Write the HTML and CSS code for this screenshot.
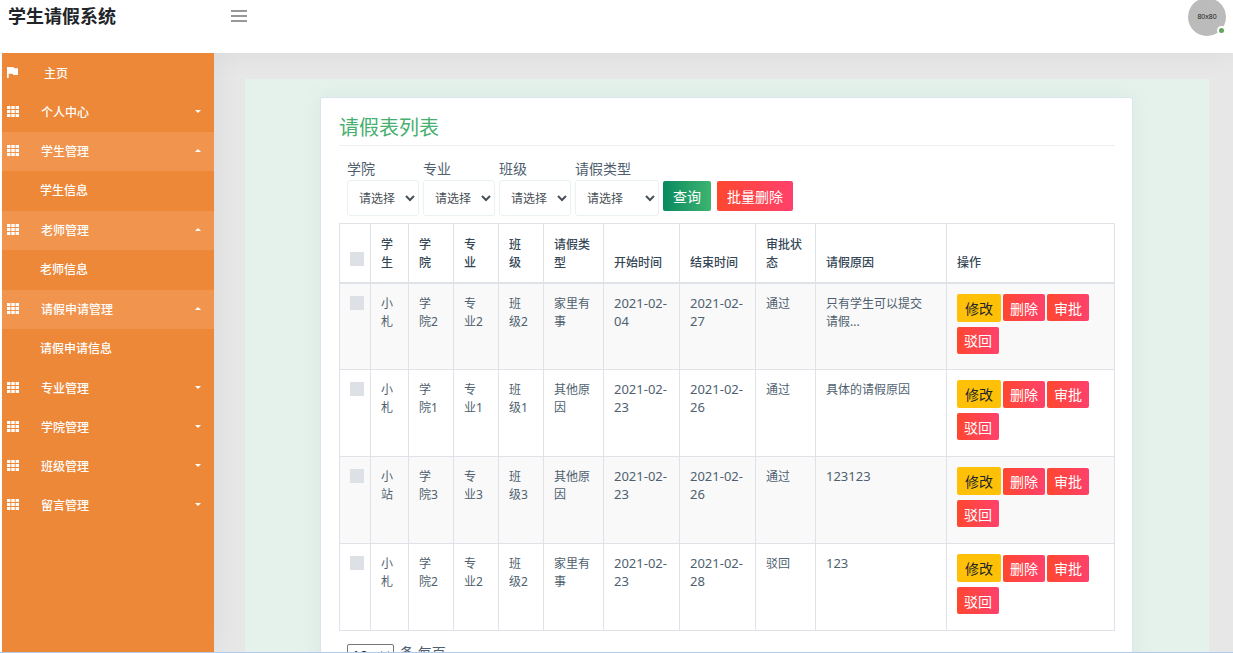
FILE: index.html
```html
<!DOCTYPE html>
<html lang="zh-CN">
<head>
<meta charset="utf-8">
<title>学生请假系统</title>
<link rel="stylesheet" href="styles.css">
</head>
<body>
<svg class="sprite" aria-hidden="true">
  <symbol id="grid" viewBox="0 0 12 11"><path d="M0 0h3.4v3H0zM4.3 0h3.4v3H4.3zM8.6 0H12v3H8.6zM0 4h3.4v3H0zM4.3 4h3.4v3H4.3zM8.6 4H12v3H8.6zM0 8h3.4v3H0zM4.3 8h3.4v3H4.3zM8.6 8H12v3H8.6z"/></symbol>
  <symbol id="flag" viewBox="0 0 12 11"><path d="M0 0h6.6l.5 1.3H11v6.6H6.2l-.4-1.2H1.7V11H0z"/></symbol>
</svg>
<header class="topbar">
  <h1 class="brand">学生请假系统</h1>
  <button class="menu-toggle" type="button" aria-label="菜单"><svg viewBox="0 0 16 12"><path d="M0 1h16M0 6h16M0 11h16"/></svg></button>
  <a class="avatar" href="#" aria-label="个人资料">80x80<span class="online"></span></a>
</header>
<div class="layout">
  <nav class="sidebar">
    <a class="item home" href="#"><svg><use href="#flag"/></svg>主页</a>
    <a class="item" href="#"><svg><use href="#grid"/></svg>个人中心<span class="caret"></span></a>
    <a class="item open" href="#"><svg><use href="#grid"/></svg>学生管理<span class="caret"></span></a>
    <a class="sub" href="#">学生信息</a>
    <a class="item open" href="#"><svg><use href="#grid"/></svg>老师管理<span class="caret"></span></a>
    <a class="sub" href="#">老师信息</a>
    <a class="item open" href="#"><svg><use href="#grid"/></svg>请假申请管理<span class="caret"></span></a>
    <a class="sub" href="#">请假申请信息</a>
    <a class="item" href="#"><svg><use href="#grid"/></svg>专业管理<span class="caret"></span></a>
    <a class="item" href="#"><svg><use href="#grid"/></svg>学院管理<span class="caret"></span></a>
    <a class="item" href="#"><svg><use href="#grid"/></svg>班级管理<span class="caret"></span></a>
    <a class="item" href="#"><svg><use href="#grid"/></svg>留言管理<span class="caret"></span></a>
  </nav>
  <main class="content">
    <div class="panel">
      <section class="card">
        <h2 class="title">请假表列表</h2>
        <form class="filters">
          <label class="field">学院<select><option>请选择</option></select></label>
          <label class="field">专业<select><option>请选择</option></select></label>
          <label class="field">班级<select><option>请选择</option></select></label>
          <label class="field wide">请假类型<select><option>请选择</option></select></label>
          <div class="actions">
            <button class="btn search" type="button">查询</button>
            <button class="btn danger" type="button">批量删除</button>
          </div>
        </form>
        <table class="list">
          <colgroup><col class="c-check"><col class="c-name"><col class="c-unit"><col class="c-unit"><col class="c-unit"><col class="c-type"><col class="c-date"><col class="c-date"><col class="c-type"><col class="c-reason"><col class="c-ops"></colgroup>
          <thead>
            <tr><th><input type="checkbox" aria-label="全选"></th><th>学生</th><th class="narrow">学院</th><th class="narrow">专业</th><th class="narrow">班级</th><th>请假类型</th><th>开始时间</th><th>结束时间</th><th>审批状态</th><th>请假原因</th><th>操作</th></tr>
          </thead>
          <tbody>
            <tr><td><input type="checkbox" aria-label="选择"></td><td>小札</td><td class="narrow">学院2</td><td class="narrow">专业2</td><td class="narrow">班级2</td><td>家里有事</td><td class="num">2021-02-04</td><td class="num">2021-02-27</td><td>通过</td><td class="narrow">只有学生可以提交请假...</td><td class="ops-cell"><div class="ops"><button class="op edit" type="button">修改</button><button class="op" type="button">删除</button><button class="op" type="button">审批</button><button class="op" type="button">驳回</button></div></td></tr>
            <tr><td><input type="checkbox" aria-label="选择"></td><td>小札</td><td class="narrow">学院1</td><td class="narrow">专业1</td><td class="narrow">班级1</td><td>其他原因</td><td class="num">2021-02-23</td><td class="num">2021-02-26</td><td>通过</td><td class="narrow">具体的请假原因</td><td class="ops-cell"><div class="ops"><button class="op edit" type="button">修改</button><button class="op" type="button">删除</button><button class="op" type="button">审批</button><button class="op" type="button">驳回</button></div></td></tr>
            <tr><td><input type="checkbox" aria-label="选择"></td><td>小站</td><td class="narrow">学院3</td><td class="narrow">专业3</td><td class="narrow">班级3</td><td>其他原因</td><td class="num">2021-02-23</td><td class="num">2021-02-26</td><td>通过</td><td class="num">123123</td><td class="ops-cell"><div class="ops"><button class="op edit" type="button">修改</button><button class="op" type="button">删除</button><button class="op" type="button">审批</button><button class="op" type="button">驳回</button></div></td></tr>
            <tr><td><input type="checkbox" aria-label="选择"></td><td>小札</td><td class="narrow">学院2</td><td class="narrow">专业2</td><td class="narrow">班级2</td><td>家里有事</td><td class="num">2021-02-23</td><td class="num">2021-02-28</td><td>驳回</td><td class="num">123</td><td class="ops-cell"><div class="ops"><button class="op edit" type="button">修改</button><button class="op" type="button">删除</button><button class="op" type="button">审批</button><button class="op" type="button">驳回</button></div></td></tr>
          </tbody>
        </table>
        <label class="pager"><select><option>10</option></select>条 每页</label>
      </section>
    </div>
  </main>
</div>
</body>
</html>
```
FILE: styles.css
```css
* { box-sizing: border-box; }
body {
  margin: 0;
  height: 100vh;
  display: flex;
  flex-direction: column;
  overflow: hidden;
  border-bottom: 1px solid #b2cbed;
  background: #fff;
  color: #4f5f6f;
  font: 12px/18px "Noto Sans", "Noto Sans CJK SC", sans-serif;
}
button, select { font-family: inherit; }
a { color: inherit; text-decoration: none; }
.sprite { display: none; }

.topbar {
  position: relative;
  z-index: 1;
  display: flex;
  align-items: flex-start;
  height: 53px;
  flex: none;
  padding: 0 7px 0 8px;
  background: #fff;
  box-shadow: 0 0 30px rgba(0, 0, 0, .06);
}
.brand {
  width: 222px;
  margin: 0;
  color: #212529;
  font-size: 18px;
  line-height: 32px;
  font-weight: 700;
}
.menu-toggle {
  padding: 10px 1px;
  border: 0;
  background: none;
  line-height: 0;
}
.menu-toggle svg { width: 16px; height: 12px; }
.menu-toggle path { stroke: #777; stroke-width: 1.5; }
.avatar {
  position: relative;
  width: 38px;
  height: 38px;
  margin: -2px 0 0 auto;
  border-radius: 50%;
  background: #bbb;
  color: #222;
  font: 7px/38px "Liberation Sans", sans-serif;
  text-align: center;
}
.online {
  position: absolute;
  right: 0;
  bottom: 1px;
  width: 9px;
  height: 9px;
  border: 2px solid #fff;
  border-radius: 50%;
  background: #5fa55a;
}

.layout { flex: 1; min-height: 0; display: flex; }
.sidebar {
  position: relative;
  z-index: 2;
  flex: none;
  width: 212px;
  margin-left: 2px;
  padding-top: 1px;
  background: #ed8839;
  color: #fff;
  font-weight: 500;
  box-shadow: 0 0 30px rgba(0, 0, 0, .06);
  clip-path: inset(0 -40px 0 0);
}
.item {
  display: flex;
  align-items: center;
  height: 39px;
  padding: 0 13px 0 5px;
}
.item svg {
  width: 12px;
  height: 11px;
  margin: 0 22px 2px 0;
  fill: #fff;
}
.home svg { margin-right: 25px; }
.open { background: #f0944e; }
.sub {
  display: block;
  padding-left: 38px;
  line-height: 40px;
}
.caret {
  margin: 0 0 2px auto;
  border: 3px solid transparent;
  border-top-color: #fff;
  border-bottom: 0;
}
.open .caret { border-bottom: 3px solid #fff; border-top: 0; }

.content { flex: 1; min-width: 0; padding: 26px 24px 0 31px; background: #e7e7e7; }
.panel { padding: 18px 76px 30px 75px; background: #e5f2eb; }
.card {
  padding: 13px 17px 30px 18px;
  border: 1px solid #dbe5ee;
  border-radius: 3px;
  background: #fff;
  box-shadow: 0 0 20px rgba(120, 150, 190, .1);
}
.title {
  margin: 0;
  padding-bottom: 1px;
  border-bottom: 1px solid #edeff0;
  color: #46b06e;
  font-size: 20px;
  line-height: 33px;
  font-weight: 400;
}
.filters { display: flex; gap: 4px; padding: 12px 8px 7px; font-size: 14px; }
.field { width: 72px; line-height: 22px; }
.field.wide { width: 84px; }
.field select {
  display: block;
  width: 100%;
  height: 36px;
  padding: 0 3px 0 7px;
  border: 1px solid #e9f2ef;
  border-radius: 3px;
  background: #fff;
  color: #495057;
  font-size: 12px;
}
.actions { display: flex; gap: 6px; padding-top: 23px; }
.btn {
  height: 30px;
  padding: 0 10px;
  border: 0;
  border-radius: 2px;
  color: #fff;
  font-size: 14px;
}
.search { background: linear-gradient(90deg, #08895f, #3eb470); }
.danger, .op { background: linear-gradient(90deg, #ff472f, #ff416c); }

.list { width: 100%; table-layout: fixed; border-collapse: collapse; }
.list th, .list td {
  padding: 11px 10px 0;
  border: 1px solid #dfe3e8;
  text-align: left;
  vertical-align: top;
  word-break: break-word;
}
.list thead tr { height: 59px; }
.list th {
  padding: 10px;
  border-bottom-width: 2px;
  color: #354656;
  font-weight: 500;
  vertical-align: bottom;
}
.list th.narrow, .list td.narrow { padding-right: 14px; }
.list td.num, .list td.ops-cell { padding-top: 10px; }
.list tbody tr { height: 87px; }
.list tbody tr:nth-child(odd) { background: #f9f9f9; }
.list .num { font-size: 13px; }
.c-check { width: 31px; }
.c-name { width: 38px; }
.c-unit { width: 45px; }
.c-type { width: 60px; }
.c-date { width: 76px; }
.c-reason { width: 131px; }
.c-ops { width: 168px; }
.list input {
  appearance: none;
  display: block;
  width: 14px;
  height: 14px;
  margin: 1px 0 0;
  background: #dde1e5;
}
.list th input { margin-bottom: 6px; }
.ops { display: flex; flex-wrap: wrap; gap: 5px 2px; align-items: center; }
.op {
  height: 27px;
  padding: 0 7px;
  border: 0;
  border-radius: 2px;
  color: #fff;
  font-size: 14px;
}
.edit { height: 28px; padding: 0 8px; background: #ffc107; color: #212529; }

.pager { display: flex; gap: 6px; margin: 13px 8px 0; font-size: 14px; }
.pager select {
  width: 47px;
  height: 20px;
  border: 1px solid #777;
  border-radius: 2px;
  background: #fff;
  color: #222;
  font-size: 14px;
}
```
